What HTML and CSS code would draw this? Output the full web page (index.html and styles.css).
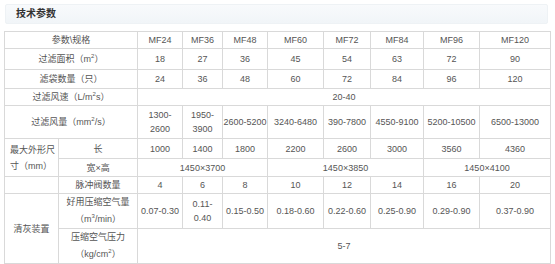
FILE: index.html
```html
<!DOCTYPE html>
<html lang="zh">
<head>
  <meta charset="UTF-8" />
  <meta name="viewport" content="width=device-width, initial-scale=1.0" />
  <title>技术参数</title>
  <link rel="stylesheet" href="styles.css">
</head>
<body>

  <div class="page">
    <div class="section-title">技术参数</div>

    <table class="spec-table">
      <colgroup>
        <col style="width:54px">
        <col style="width:79px">
        <col style="width:45px">
        <col style="width:40px">
        <col style="width:45px">
        <col style="width:56px">
        <col style="width:47px">
        <col style="width:53px">
        <col style="width:56px">
        <col style="width:71px">
      </colgroup>
      <tr>
        <td colspan="2">参数\规格</td>
        <td>MF24</td><td>MF36</td><td>MF48</td><td>MF60</td>
        <td>MF72</td><td>MF84</td><td>MF96</td><td>MF120</td>
      </tr>
      <tr>
        <td colspan="2">过滤面积（m<sup>2</sup>）</td>
        <td>18</td><td>27</td><td>36</td><td>45</td>
        <td>54</td><td>63</td><td>72</td><td>90</td>
      </tr>
      <tr>
        <td colspan="2">滤袋数量（只）</td>
        <td>24</td><td>36</td><td>48</td><td>60</td>
        <td>72</td><td>84</td><td>96</td><td>120</td>
      </tr>
      <tr>
        <td colspan="2">过滤风速（L/m<sup>2</sup>s）</td>
        <td colspan="8">20-40</td>
      </tr>
      <tr>
        <td colspan="2">过滤风量（mm<sup>2</sup>/s）</td>
        <td>1300-<br>2600</td><td>1950-<br>3900</td><td>2600-5200</td><td>3240-6480</td>
        <td>390-7800</td><td>4550-9100</td><td>5200-10500</td><td>6500-13000</td>
      </tr>
      <tr>
        <td rowspan="2" class="left">最大外形尺寸（mm）</td>
        <td>长</td>
        <td>1000</td><td>1400</td><td>1800</td><td>2200</td>
        <td>2600</td><td>3000</td><td>3560</td><td>4360</td>
      </tr>
      <tr>
        <td>宽×高</td>
        <td colspan="3">1450×3700</td>
        <td colspan="3">1450×3850</td>
        <td colspan="2">1450×4100</td>
      </tr>
      <tr>
        <td></td>
        <td>脉冲阀数量</td>
        <td>4</td><td>6</td><td>8</td><td>10</td>
        <td>12</td><td>14</td><td>16</td><td>20</td>
      </tr>
      <tr>
        <td rowspan="2">清灰装置</td>
        <td>好用压缩空气量<br>（m<sup>3</sup>/min）</td>
        <td>0.07-0.30</td><td>0.11-<br>0.40</td><td>0.15-0.50</td><td>0.18-0.60</td>
        <td>0.22-0.60</td><td>0.25-0.90</td><td>0.29-0.90</td><td>0.37-0.90</td>
      </tr>
      <tr>
        <td>压缩空气压力<br>（kg/cm<sup>2</sup>）</td>
        <td colspan="8">5-7</td>
      </tr>
    </table>
  </div>

</body>
</html>
```

FILE: styles.css
```css
body {
  margin: 0;
  background: #fff;
  font-family: "Liberation Sans", "Noto Sans CJK SC", sans-serif;
  color: #555;
}

.page {
  padding: 4px 5px 0 4px;
}

.section-title {
  margin: 0 2px 7px 1px;
  height: 18px;
  line-height: 18px;
  padding-left: 10px;
  font-size: 10px;
  font-weight: bold;
  color: #333;
  background: linear-gradient(to bottom, #f8fafc, #f1f5f8);
  border: 1px solid #eef2f5;
  border-radius: 2px;
}

.spec-table {
  width: 546px;
  table-layout: fixed;
  border-collapse: collapse;
  font-size: 9px;
  line-height: 14px;
}

.spec-table td {
  border: 1px solid #d9d9d9;
  text-align: center;
  vertical-align: middle;
  padding: 0;
  white-space: nowrap;
  overflow: hidden;
}

.spec-table td.left {
  text-align: left;
  padding-left: 5px;
  line-height: 16px;
  white-space: normal;
}

.spec-table sup {
  font-size: 6px;
  line-height: 0;
  vertical-align: 4px;
}

/* высоты строк как на скриншоте */
.spec-table tr:nth-child(1) { height: 17px; }
.spec-table tr:nth-child(2) { height: 21px; }
.spec-table tr:nth-child(3) { height: 19px; }
.spec-table tr:nth-child(4) { height: 17px; }
.spec-table tr:nth-child(5) { height: 33px; }
.spec-table tr:nth-child(6) { height: 20px; }
.spec-table tr:nth-child(7) { height: 18px; }
.spec-table tr:nth-child(8) { height: 17px; }
.spec-table tr:nth-child(9) { height: 34px; }
.spec-table tr:nth-child(10) { height: 32px; }

.spec-table tr:nth-child(9) td:nth-child(2),
.spec-table tr:nth-child(10) td:nth-child(1) {
  line-height: 17px;
}
```
